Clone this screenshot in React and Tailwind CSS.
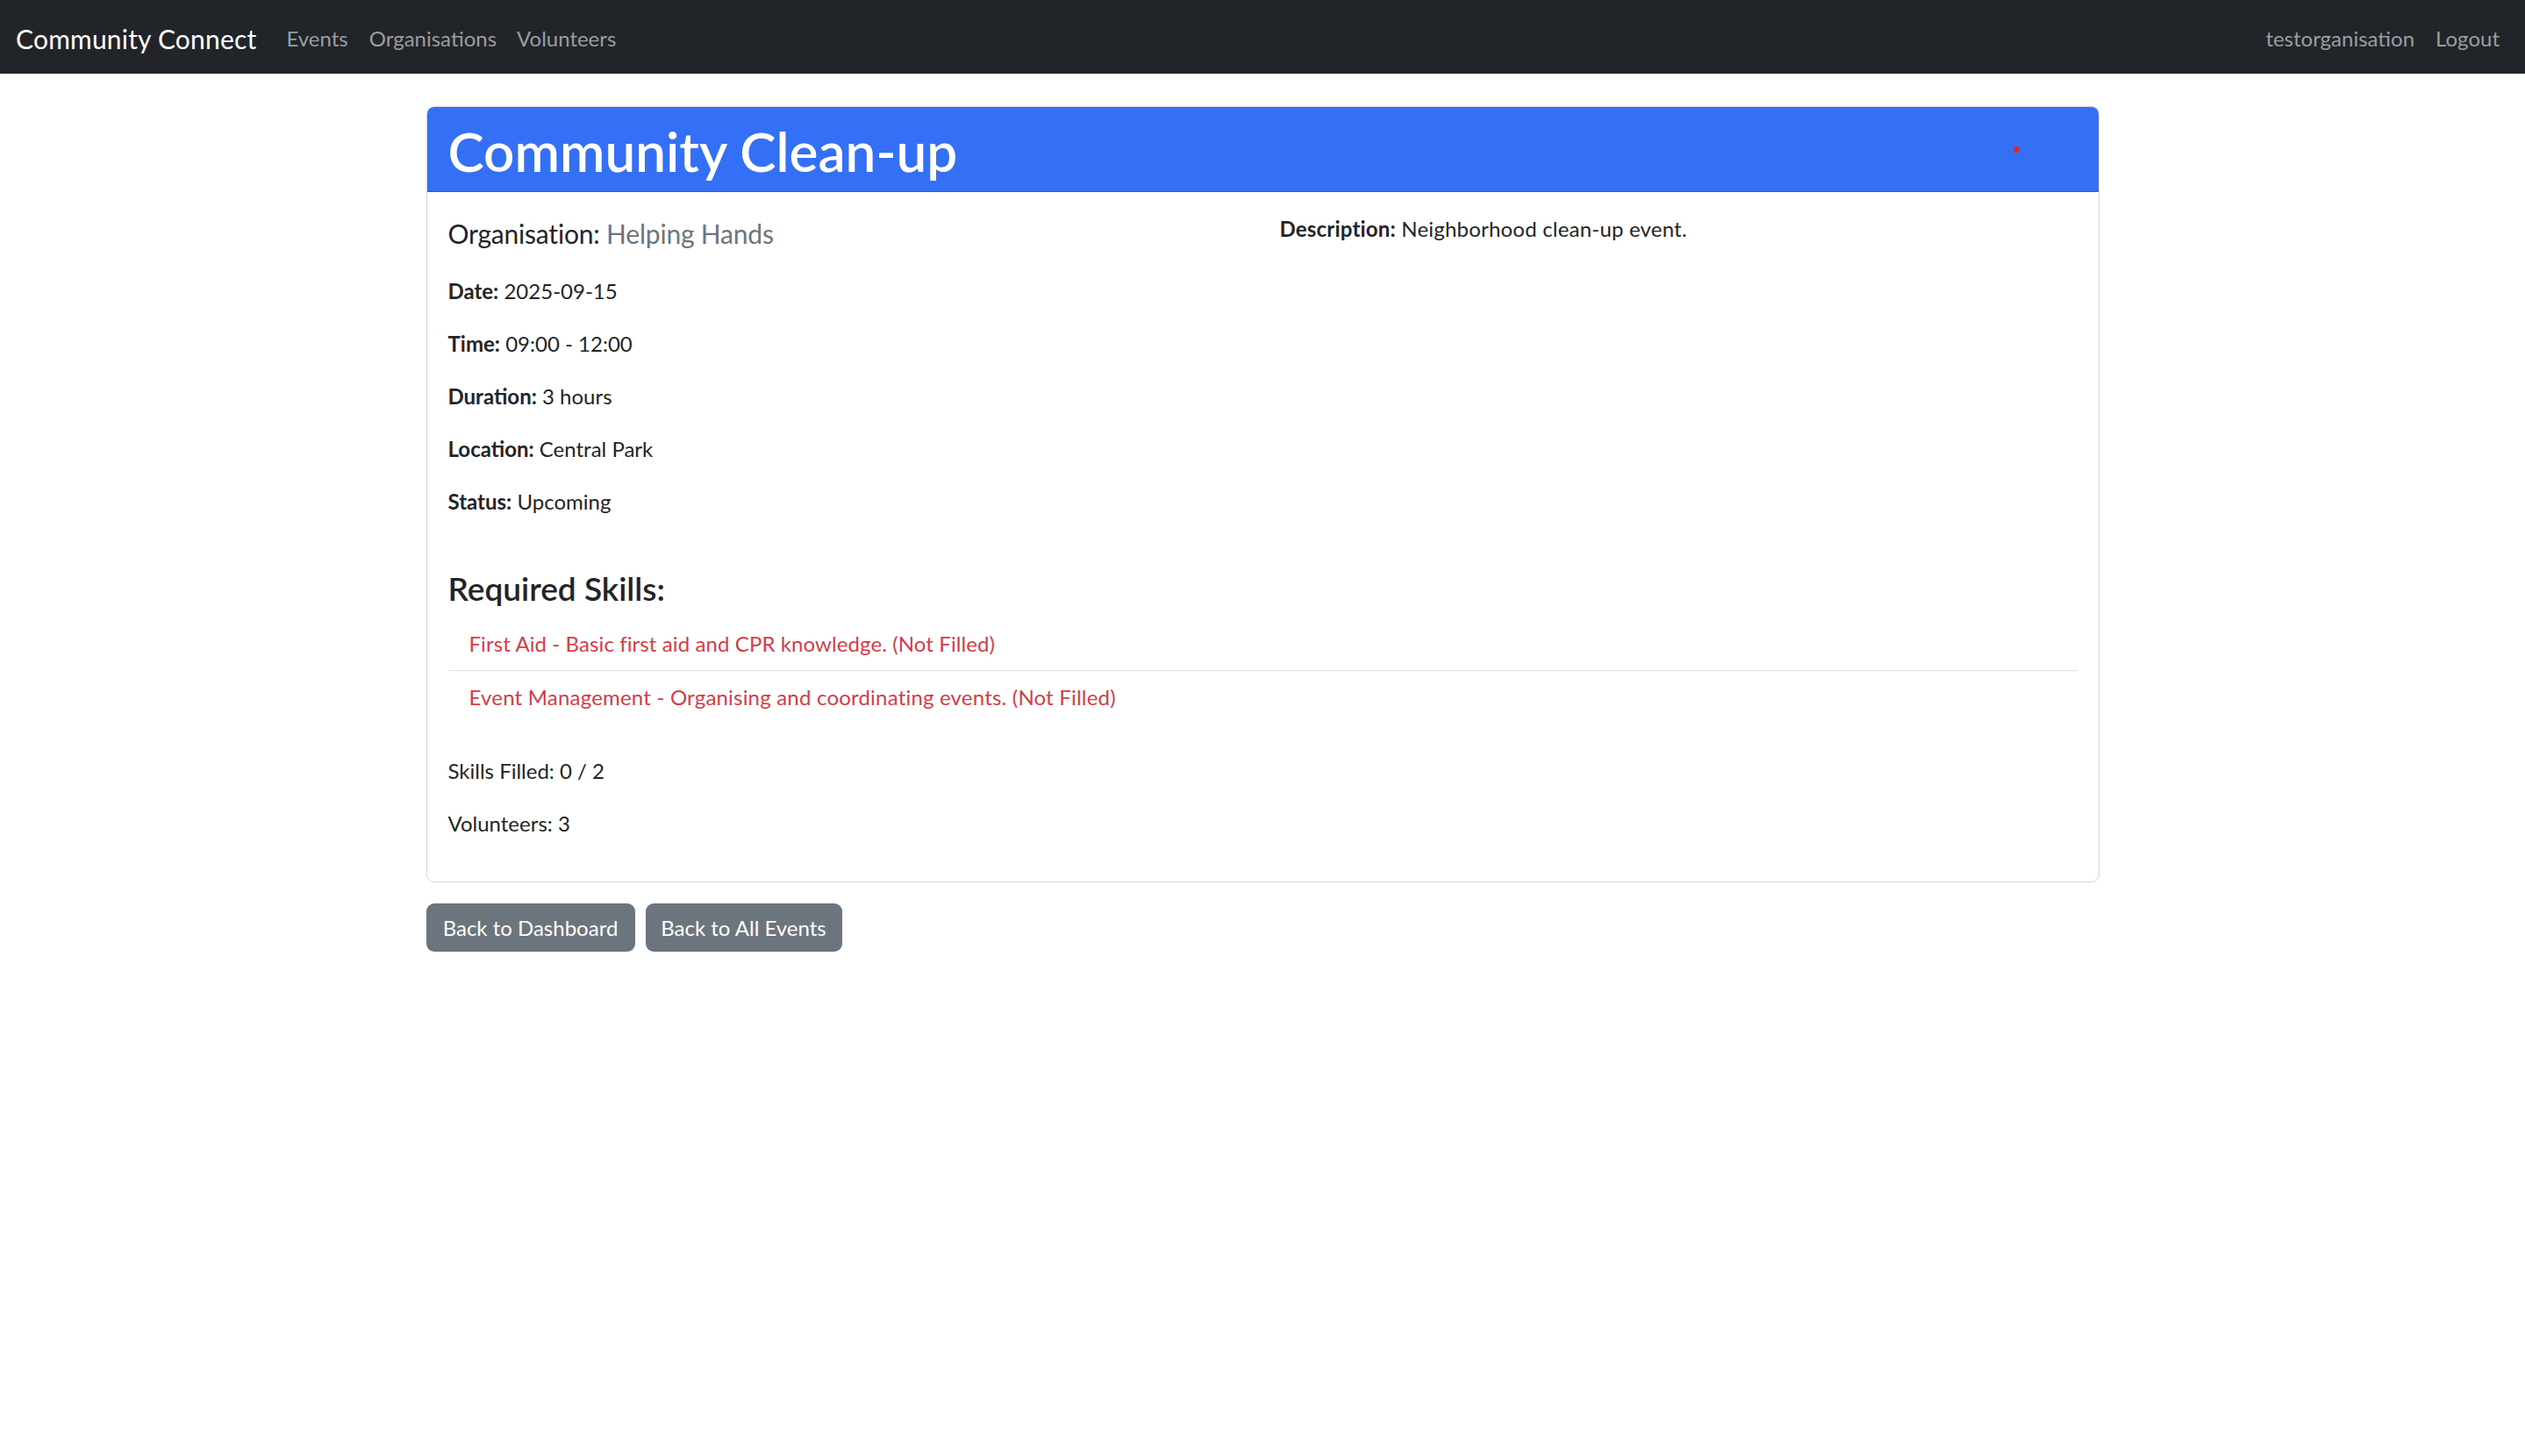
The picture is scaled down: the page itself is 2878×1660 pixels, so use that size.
export default function App() {
  const details = [
    ["Date:", "2025-09-15"],
    ["Time:", "09:00 - 12:00"],
    ["Duration:", "3 hours"],
    ["Location:", "Central Park"],
    ["Status:", "Upcoming"],
  ];
  return (
    <div className="min-h-screen bg-white font-['Lato',sans-serif] text-[#212529]">
      <nav className="h-[84px] bg-[#212529] flex items-center justify-between pl-[18px] pr-[17px] pt-[4px]">
        <div className="flex items-center">
          <span className="text-[30px] leading-[36px] text-white mr-[22px] tracking-[0.2px]">Community Connect</span>
          <a className="px-[12px] text-[24px] leading-[36px] text-[#9a9da0]">Events</a>
          <a className="px-[12px] text-[24px] leading-[36px] text-[#9a9da0]">Organisations</a>
          <a className="px-[11px] text-[24px] leading-[36px] text-[#9a9da0]">Volunteers</a>
        </div>
        <div className="flex items-center">
          <a className="px-[12px] text-[24px] leading-[36px] text-[#9a9da0]">testorganisation</a>
          <a className="px-[12px] text-[24px] leading-[36px] text-[#9a9da0]">Logout</a>
        </div>
      </nav>

      <main className="w-[1907px] mx-auto mt-[37px]">
        <div className="border border-[#d6d6d6] rounded-[9px] overflow-hidden">
          <div className="relative bg-[#3370f5] border-b border-[#2a5fd6] px-[24px] pt-[14px] pb-[10px]">
            <h1 className="text-[62px] leading-[72px] font-semibold text-white">Community Clean-up</h1>
            <span className="absolute left-[1808px] top-[45px] w-[7px] h-[7px] rounded-full bg-[#e5222a]" />
          </div>

          <div className="p-[24px] flex flex-col">
            <div className="grid grid-cols-[948px_1fr]">
              <div className="flex flex-col">
                <h5 className="mt-[5px] mb-[30px] text-[30px] leading-[36px] font-normal tracking-[-0.2px]">
                  Organisation: <span className="text-[#6c757d]">Helping Hands</span>
                </h5>
                {details.map(([k, v]) => (
                  <p key={k} className="mb-[24px] text-[24px] leading-[36px]">
                    <strong className="font-bold">{k}</strong> {v}
                  </p>
                ))}
              </div>
              <div>
                <p className="text-[24px] leading-[36px] tracking-[0.2px]">
                  <strong className="font-bold">Description:</strong> Neighborhood clean-up event.
                </p>
              </div>
            </div>

            <h4 className="mt-[35px] mb-[12px] text-[37px] leading-[43px] font-semibold">Required Skills:</h4>
            <ul className="mb-[36px] flex flex-col">
              <li className="px-[24px] py-[12px] text-[24px] leading-[36px] text-[#d83a48] border-b border-[#e0e0e0] tracking-[0.1px]">
                First Aid - Basic first aid and CPR knowledge. (Not Filled)
              </li>
              <li className="px-[24px] py-[12px] text-[24px] leading-[36px] text-[#d83a48] tracking-[0.2px]">
                Event Management - Organising and coordinating events. (Not Filled)
              </li>
            </ul>

            <p className="mb-[24px] text-[24px] leading-[36px]">Skills Filled: 0 / 2</p>
            <p className="mb-[24px] text-[24px] leading-[36px]">Volunteers: 3</p>
          </div>
        </div>

        <div className="mt-[24px] flex gap-[12px]">
          <button className="w-[238px] h-[55px] rounded-[9px] bg-[#6c757d] text-white text-[24px] leading-[36px] text-center">
            Back to Dashboard
          </button>
          <button className="w-[224px] h-[55px] rounded-[9px] bg-[#6c757d] text-white text-[24px] leading-[36px] text-center">
            Back to All Events
          </button>
        </div>
      </main>
    </div>
  );
}
